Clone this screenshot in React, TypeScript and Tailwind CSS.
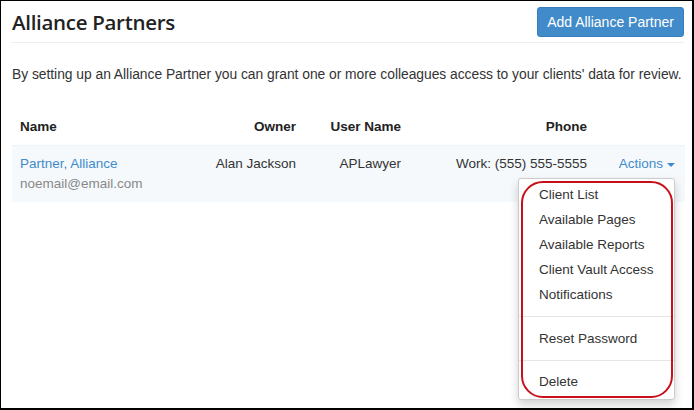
import React from "react";

const items1 = ["Client List", "Available Pages", "Available Reports", "Client Vault Access", "Notifications"];

export default function App() {
  return (
    <div className="w-[694px] h-[410px] bg-white border-l border-t border-r-2 border-b-2 border-black text-[#333] overflow-hidden" style={{ fontFamily: '"Liberation Sans", Arial, sans-serif' }}>
      <div className="pl-[11px] pr-[7px] pt-[6px]">
        <div className="flex items-center justify-between h-[30px] pb-0">
          <h1 className="text-[20.5px] font-semibold text-[#222] leading-none tracking-[-0.3px] mt-[1px]" style={{ fontFamily: '"Open Sans", sans-serif' }}>Alliance Partners</h1>
          <button className="h-[30px] px-[9px] bg-[#428bca] text-white text-[14px] rounded-[3px] border border-[#3a7fbd] mr-[1px]">Add Alliance Partner</button>
        </div>
        <div className="h-px bg-[#eee] mt-[5px] mr-[1px] -ml-[1px]" />
        <p className="text-[13.85px] mt-[21px] leading-[20px] whitespace-nowrap tracking-[-0.03px]">By setting up an Alliance Partner you can grant one or more colleagues access to your clients' data for review.</p>

        <div className="mt-[33px] text-[13.5px]">
          <div className="grid grid-cols-[188px_104px_105px_186px_88px] font-bold text-[#222] leading-[20px]">
            <div className="px-2 pb-[8px] text-left">Name</div>
            <div className="px-2 pb-[8px] text-right">Owner</div>
            <div className="px-2 pb-[8px] text-right">User Name</div>
            <div className="px-2 pb-[8px] text-right">Phone</div>
            <div className="px-2 pb-[8px]" />
          </div>
          <div className="grid grid-cols-[188px_104px_105px_186px_88px] bg-[#f5f9fc] leading-[20px] border-t border-[#eef3f7]">
            <div className="px-2 py-[8px]">
              <div className="text-[#428bca]">Partner, Alliance</div>
              <div className="text-[#888]">noemail@email.com</div>
            </div>
            <div className="px-2 py-[8px] text-right">Alan Jackson</div>
            <div className="px-2 py-[8px] text-right">APLawyer</div>
            <div className="px-2 py-[8px] text-right">Work: (555) 555-5555</div>
            <div className="px-2 py-[8px] text-right relative">
              <span className="text-[#428bca] inline-flex items-center gap-[4px]">
                Actions
                <span className="inline-block w-0 h-0 border-l-[4px] border-r-[4px] border-t-[4px] border-l-transparent border-r-transparent border-t-[#428bca] mt-[1px]" />
              </span>
              <div className="absolute top-[32px] right-[8px] w-[157px] bg-white border border-[#ccc] rounded-[3px] shadow-[0_5px_10px_rgba(0,0,0,0.18)] pt-[3px] pb-[5px] text-left text-[#333] z-10">
                {items1.map((t) => (
                  <div key={t} className="px-[20px] leading-[25px]">{t}</div>
                ))}
                <div className="h-px bg-[#e5e5e5] my-[9px]" />
                <div className="px-[20px] leading-[25px]">Reset Password</div>
                <div className="h-px bg-[#e5e5e5] mt-[9px] mb-[8px]" />
                <div className="px-[20px] leading-[25px]">Delete</div>
                <div className="absolute left-[2px] right-[1px] top-[2px] bottom-[1px] border-2 border-[#c8101a] rounded-[22px] pointer-events-none" />
              </div>
            </div>
          </div>
        </div>
      </div>
    </div>
  );
}
